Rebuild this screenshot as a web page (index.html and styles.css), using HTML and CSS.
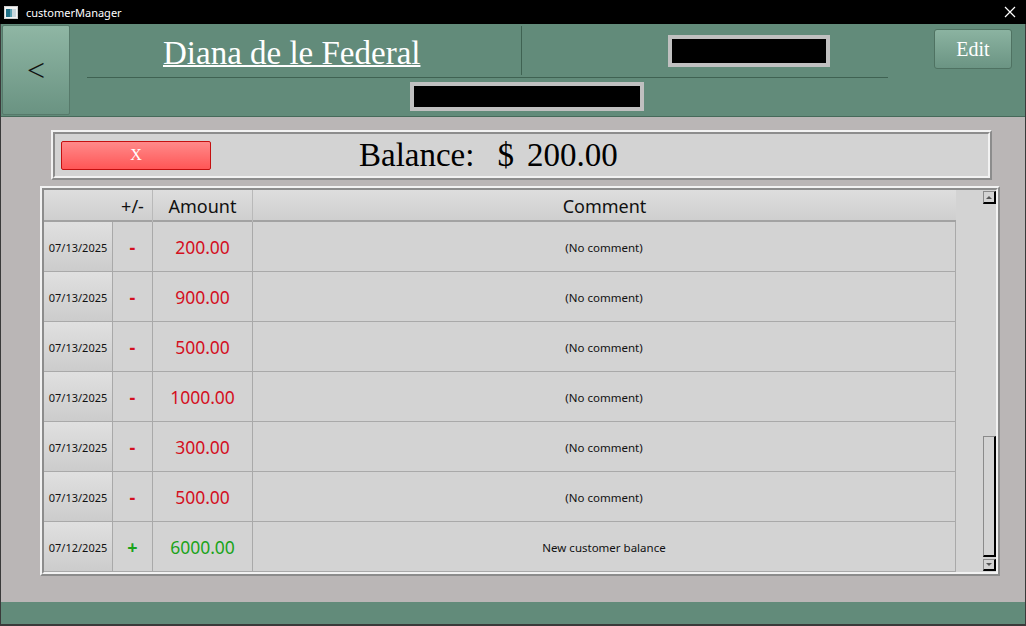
FILE: index.html
```html
<!DOCTYPE html>
<html>
<head>
<meta charset="utf-8">
<title>customerManager</title>
<link rel="stylesheet" href="styles.css">
</head>
<body>
<div class="titlebar">
  <svg class="app-icon" width="14" height="13" viewBox="0 0 14 13">
    <rect x="0.5" y="0.5" width="13" height="12" fill="#f4f4f4" stroke="#cfcfcf"/>
    <rect x="2" y="3" width="4" height="8" fill="#1f6f86"/>
    <rect x="6" y="3" width="2" height="8" fill="#5a9fb0"/>
    <rect x="8" y="3" width="4" height="8" fill="#c9d6dc"/>
  </svg>
  <span class="app-name">customerManager</span>
  <svg class="close" width="12" height="12" viewBox="0 0 12 12">
    <path d="M1 1 L11 11 M11 1 L1 11" stroke="#fff" stroke-width="1.2"/>
  </svg>
</div>
<div class="window">
  <header class="hdr">
    <button class="back">&lt;</button>
    <div class="hmain">
      <div class="hrow1">
        <div class="title-cell"><span class="title">Diana de le Federal</span></div>
        <div class="field-cell"><div class="blackbox b1"></div></div>
      </div>
      <div class="hrow2"><div class="blackbox b2"></div></div>
    </div>
    <button class="edit">Edit</button>
  </header>
  <main class="content">
    <div class="balance ridge">
      <div class="balance-inner ridge-in">
        <button class="xbtn">X</button>
        <span class="bal-text"><span class="bal-label">Balance:</span><span class="bal-cur">$</span><span>200.00</span></span>
      </div>
    </div>
    <div class="table ridge">
      <div class="table-inner ridge-in">
        <div class="grid">
          <div class="thead">
            <div class="th th-date"></div>
            <div class="th th-sep">+/-</div>
            <div class="th th-sep">Amount</div>
            <div class="th">Comment</div>
          </div>
          <div class="row"><div class="date">07/13/2025</div><div class="sign neg">-</div><div class="amt neg">200.00</div><div class="cmt">(No comment)</div></div>
          <div class="row"><div class="date">07/13/2025</div><div class="sign neg">-</div><div class="amt neg">900.00</div><div class="cmt">(No comment)</div></div>
          <div class="row"><div class="date">07/13/2025</div><div class="sign neg">-</div><div class="amt neg">500.00</div><div class="cmt">(No comment)</div></div>
          <div class="row"><div class="date">07/13/2025</div><div class="sign neg">-</div><div class="amt neg">1000.00</div><div class="cmt">(No comment)</div></div>
          <div class="row"><div class="date">07/13/2025</div><div class="sign neg">-</div><div class="amt neg">300.00</div><div class="cmt">(No comment)</div></div>
          <div class="row"><div class="date">07/13/2025</div><div class="sign neg">-</div><div class="amt neg">500.00</div><div class="cmt">(No comment)</div></div>
          <div class="row"><div class="date">07/12/2025</div><div class="sign pos">+</div><div class="amt pos">6000.00</div><div class="cmt">New customer balance</div></div>
        </div>
        <div class="filler"></div>
        <div class="scroll">
          <div class="sbtn"><span class="tri-up"></span></div>
          <div class="thumb"></div>
          <div class="sbtn down"><span class="tri-down"></span></div>
        </div>
      </div>
    </div>
  </main>
  <footer class="footer"></footer>
</div>
</body>
</html>
```
FILE: styles.css
```css
* { box-sizing: border-box; }
html, body { margin: 0; padding: 0; }
body {
  width: 1026px;
  height: 626px;
  overflow: hidden;
  background: #000;
  font-family: "Noto Sans", "Open Sans", sans-serif;
}
.titlebar {
  height: 24px;
  display: flex;
  align-items: center;
  color: #fff;
  font-size: 11px;
}
.app-icon { margin-left: 4px; margin-right: 8px; }
.close { margin-left: auto; margin-right: 10px; }

.window {
  height: 602px;
  border-left: 1px solid #3a3a3a;
  border-right: 1px solid #3a3a3a;
  border-bottom: 2px solid #3a3a3a;
  display: flex;
  flex-direction: column;
  background: #bab6b6;
}
.hdr {
  height: 93px;
  flex: none;
  padding-top: 1px;
  border-bottom: 1px solid #466a5a;
  background: #628b7a;
  display: flex;
  align-items: flex-start;
}
.back {
  margin-left: 1px;
  width: 68px;
  height: 90px;
  padding: 0;
  border: 1px solid #56796a;
  border-radius: 2px;
  background: linear-gradient(#8fb6a4, #6a9382);
  font: 32px/1 "Liberation Serif", serif;
  color: #111;
}
.hmain { margin-left: 17px; width: 801px; }
.hrow1 {
  display: flex;
  height: 53px;
  border-bottom: 1px solid #3f6252;
}
.title-cell {
  width: 435px;
  height: 49px;
  margin-top: 1px;
  border-right: 1px solid #3f6252;
  padding: 8px 0 0 76px;
}
.title {
  font: 33px/38px "Liberation Serif", serif;
  color: #fff;
  text-decoration: underline;
  text-decoration-thickness: 2px;
}
.field-cell { flex: 1; padding: 10px 0 0 146px; }
.blackbox { background: #000; border: 4px solid #c0c0c0; }
.b1 { width: 162px; height: 32px; }
.b2 { width: 234px; height: 29px; }
.hrow2 { padding: 4px 0 0 323px; }
.edit {
  margin: 4px 0 0 46px;
  width: 78px;
  height: 40px;
  padding: 0;
  border: 1px solid #4f7262;
  border-radius: 3px;
  background: linear-gradient(#8bb3a1, #6b9483);
  color: #fff;
  font: 20px "Liberation Serif", serif;
}

.content {
  flex: 1;
  display: flex;
  flex-direction: column;
  align-items: flex-start;
  padding: 13px 0 0 39px;
}
.ridge {
  border-style: solid;
  border-width: 2px;
  border-color: #f2f2f2 #8c8c8c #8c8c8c #f2f2f2;
}
.ridge-in {
  border-style: solid;
  border-width: 2px;
  border-color: #8c8c8c #f2f2f2 #f2f2f2 #8c8c8c;
  background: #d3d3d3;
}
.balance { margin-left: 11px; width: 941px; height: 50px; }
.balance-inner {
  height: 100%;
  display: flex;
  align-items: center;
  padding-left: 6px;
}
.xbtn {
  width: 150px;
  height: 29px;
  padding: 0;
  border: 1px solid #c41010;
  border-radius: 2px;
  background: linear-gradient(#ff8a8a, #ff5656);
  color: #fff;
  font: 16px "Liberation Serif", serif;
}
.bal-text {
  margin-left: 148px;
  font: 33px/38px "Liberation Serif", serif;
  color: #000;
  display: flex;
}
.bal-label { margin-right: 23px; }
.bal-cur { margin-right: 13px; }

.table { margin-top: 6px; width: 960px; height: 390px; }
.table-inner { height: 100%; display: flex; }
.grid { width: 912px; }
.thead {
  display: grid;
  grid-template-columns: 69px 40px 100px 703px;
  height: 32px;
  border-bottom: 2px solid #a2a2a2;
  background: linear-gradient(#dedede, #cfcfcf);
}
.th {
  font-size: 18px;
  color: #111;
  text-align: center;
  line-height: 32px;
}
.th-sep { border-right: 1px solid #b9b9b9; }
.row {
  display: grid;
  grid-template-columns: 69px 40px 100px 703px;
  height: 50px;
  border-bottom: 1px solid #a9a9a9;
}
.row > div {
  display: flex;
  align-items: center;
  justify-content: center;
  border-right: 1px solid #a9a9a9;
  padding-top: 1px;
}
.date {
  background: linear-gradient(#e0e0e0, #cccccc);
  font-size: 11px;
  color: #111;
}
.sign { font-size: 18px; font-weight: bold; }
.amt { font-size: 17.5px; }
.cmt { font-size: 11.5px; color: #111; }
.neg { color: #d40f1e; }
.pos { color: #1aa31a; }
.filler { width: 26px; }
.scroll {
  width: 14px;
  padding-left: 1px;
  display: flex;
  flex-direction: column;
}
.sbtn, .thumb {
  width: 13px;
  border-top: 1px solid #8a8a8a;
  border-left: 1px solid #8a8a8a;
  border-right: 2px solid #000;
  border-bottom: 2px solid #000;
  background: #d3d3d3;
}
.sbtn {
  height: 13px;
  margin-top: 1px;
  display: flex;
  align-items: center;
  justify-content: center;
}
.sbtn.down { height: 12px; margin-top: 2px; margin-bottom: 1px; }
.thumb { height: 121px; margin-top: auto; }
.tri-up, .tri-down { width: 0; height: 0; border-left: 3px solid transparent; border-right: 3px solid transparent; }
.tri-up { border-bottom: 3px solid #555; }
.tri-down { border-top: 3px solid #555; }

.footer { height: 22px; flex: none; background: #628b7a; }
```
